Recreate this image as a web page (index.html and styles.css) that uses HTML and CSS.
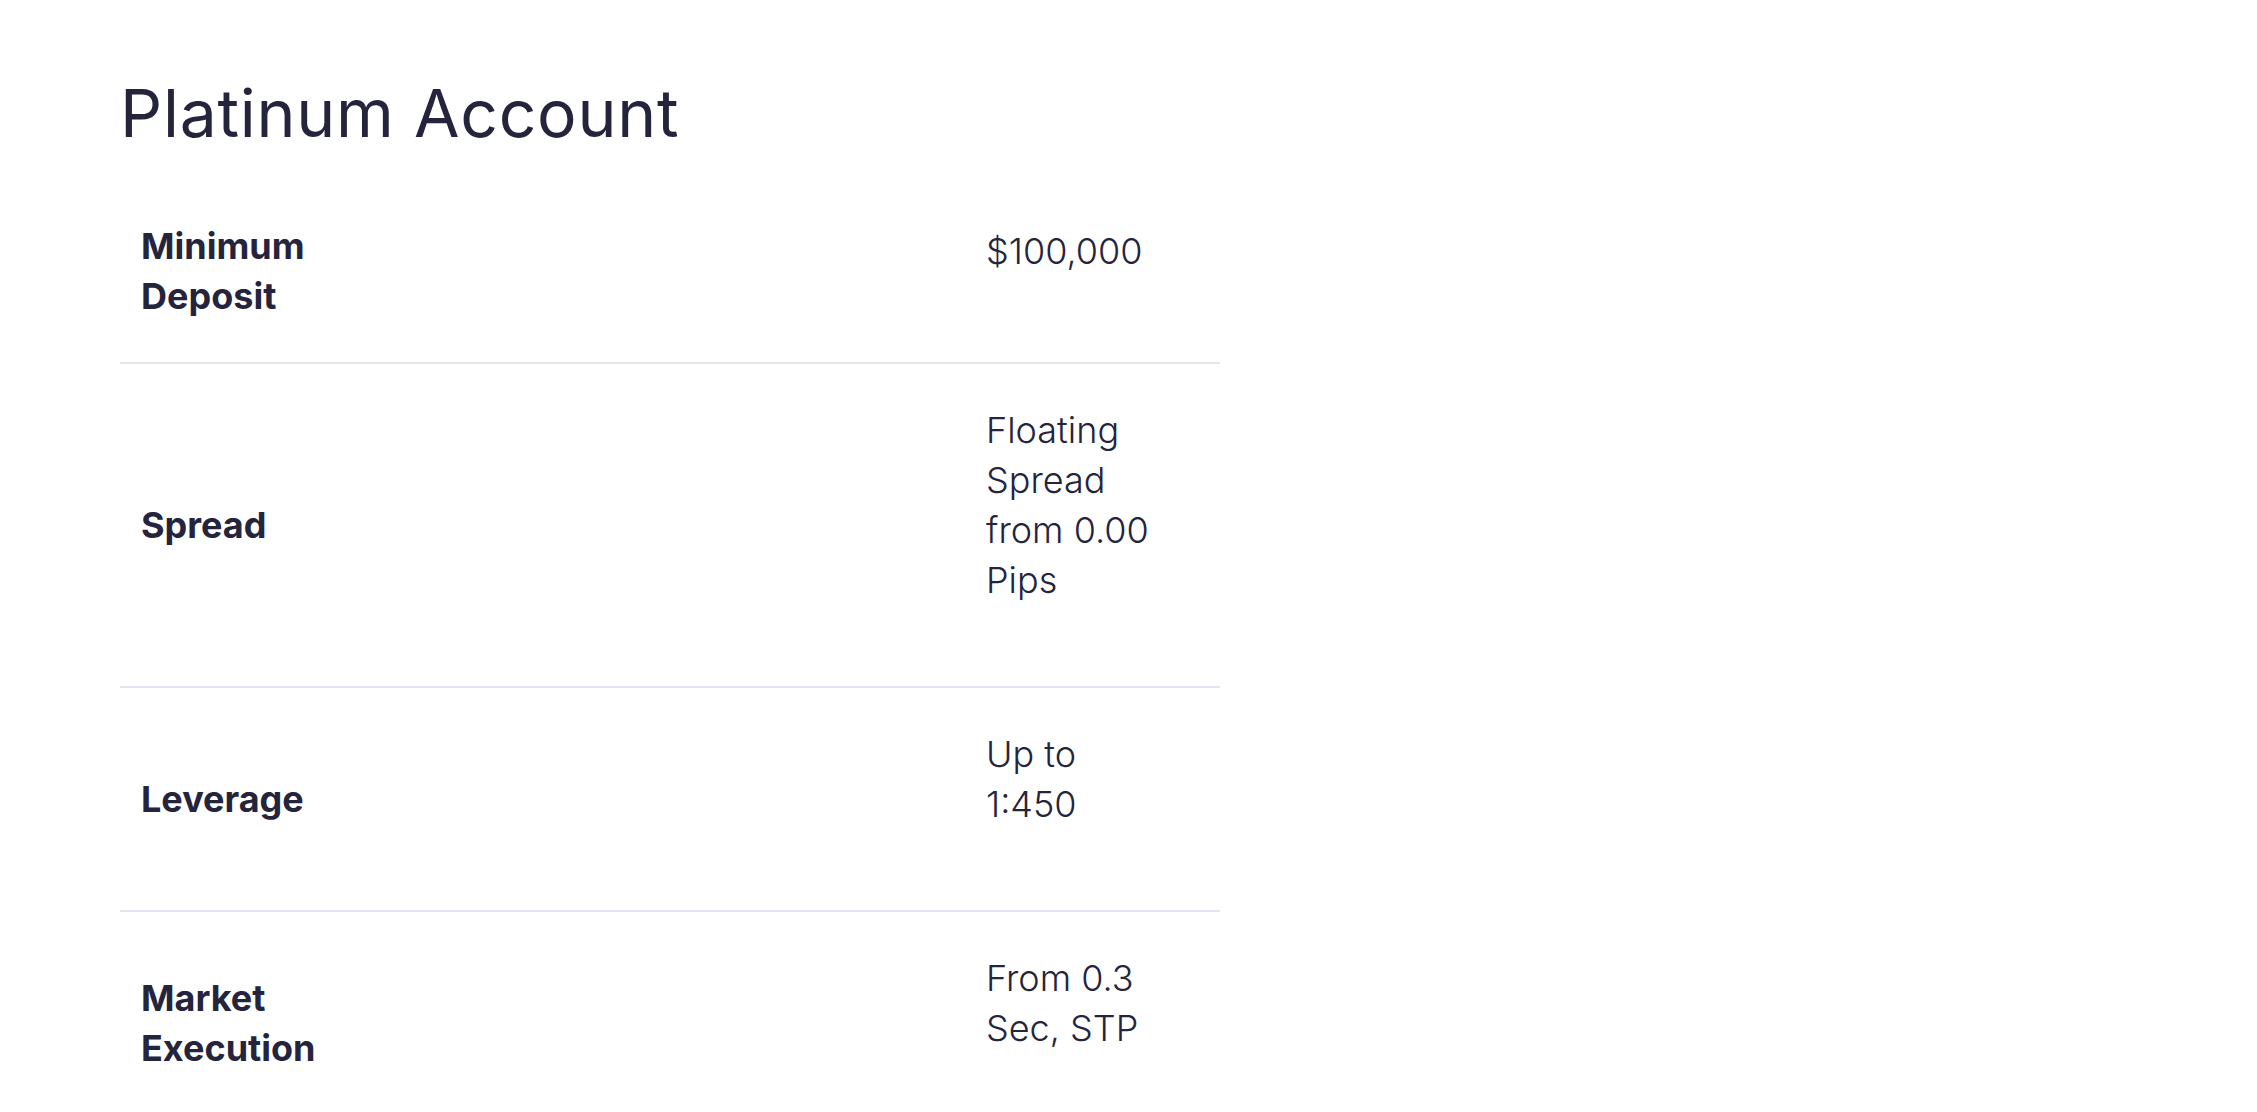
FILE: index.html
```html
<!DOCTYPE html>
<html lang="en">
<head>
<meta charset="utf-8">
<title>Platinum Account</title>
<link rel="stylesheet" href="styles.css">
</head>
<body>
<main class="page">
  <h1 class="title">Platinum Account</h1>
  <div class="specs">
    <div class="row">
      <div class="label">Minimum Deposit</div>
      <div class="value"><p>$100,000</p></div>
    </div>
    <div class="row">
      <div class="label">Spread</div>
      <div class="value"><p>Floating Spread from 0.00 Pips</p></div>
    </div>
    <div class="row">
      <div class="label">Leverage</div>
      <div class="value"><p>Up to 1:450</p></div>
    </div>
    <div class="row">
      <div class="label">Market Execution</div>
      <div class="value"><p>From 0.3 Sec, STP</p></div>
    </div>
  </div>
</main>
</body>
</html>
```
FILE: styles.css
```css
html, body {
  margin: 0;
  padding: 0;
  background: #ffffff;
}
body {
  font-family: "Inter", "Lato", "Liberation Sans", sans-serif;
  color: #25243d;
}
.page {
  padding: 0 0 0 120px;
  width: 1100px;
}
.title {
  margin: 0;
  padding-top: 71px;
  font-size: 66px;
  line-height: 84px;
  font-weight: 400;
  letter-spacing: 0.75px;
}
.specs {
  margin-top: 25px;
}
.row {
  display: grid;
  grid-template-columns: 1fr 234px;
  align-items: center;
  padding: 41px 0 41px 21px;
  border-bottom: 2px solid #e4e4ee;
}
.row:last-child {
  border-bottom: none;
}
.label {
  max-width: 240px;
  font-size: 36px;
  line-height: 50px;
  font-weight: 700;
}
.value {
  width: 180px;
  font-size: 36px;
  line-height: 50px;
  font-weight: 300;
}
.value p {
  margin: 0 0 40px 0;
}
```
